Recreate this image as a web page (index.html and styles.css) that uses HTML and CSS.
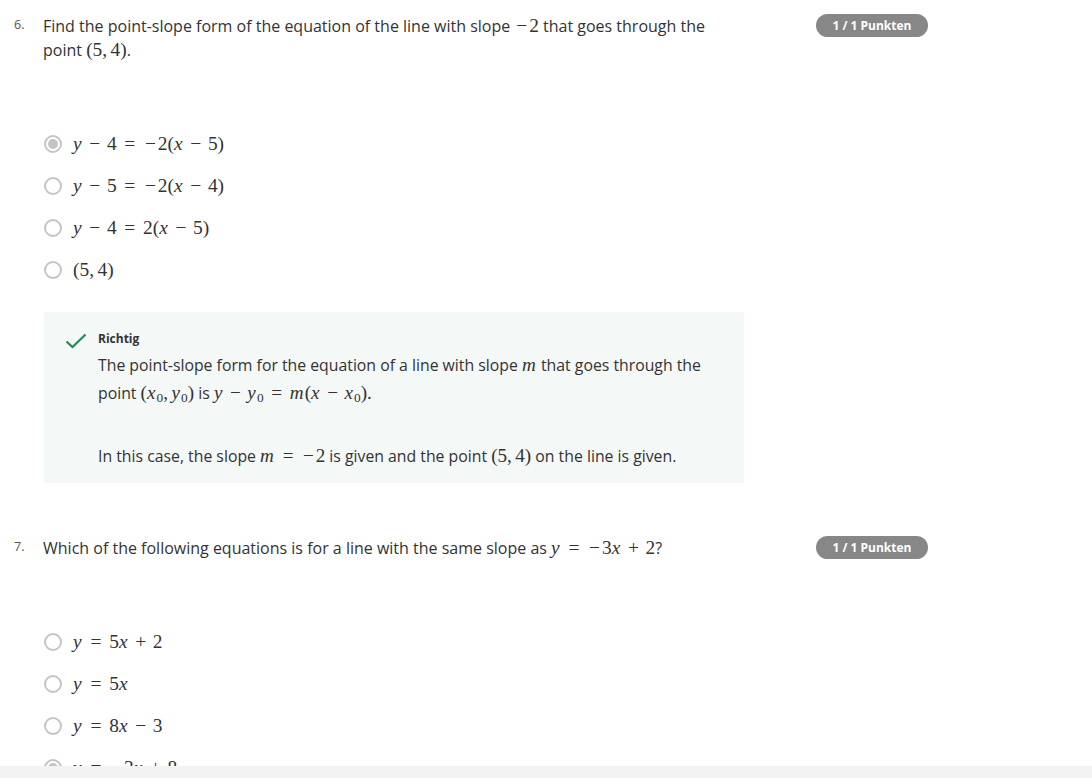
FILE: index.html
```html
<!DOCTYPE html>
<html lang="de">
<head>
<meta charset="utf-8">
<title>Quiz</title>
<link rel="stylesheet" href="styles.css">
</head>
<body>
<main class="page">
  <section class="question">
    <div class="q-head">
      <span class="q-num">6.</span>
      <p class="q-text">Find the point-slope form of the equation of the line with slope <span class="m"><u>−</u>2</span> that goes through the point <span class="m">(5,<span class="sp"></span>4)</span>.</p>
      <span class="badge">1 / 1 Punkten</span>
    </div>
    <ul class="options">
      <li class="option"><span class="radio selected"></span><span class="m eq"><i>y</i><b>−</b>4<s>=</s><u>−</u>2(<i>x</i><b>−</b>5)</span></li>
      <li class="option"><span class="radio"></span><span class="m eq"><i>y</i><b>−</b>5<s>=</s><u>−</u>2(<i>x</i><b>−</b>4)</span></li>
      <li class="option"><span class="radio"></span><span class="m eq"><i>y</i><b>−</b>4<s>=</s>2(<i>x</i><b>−</b>5)</span></li>
      <li class="option"><span class="radio"></span><span class="m eq">(5,<span class="sp"></span>4)</span></li>
    </ul>
    <div class="feedback">
      <svg class="check" width="22" height="16" viewBox="0 0 22 16"><path d="M1.5 8.5 L7.5 14 L20.5 1.5" fill="none" stroke="#1f8a55" stroke-width="2.2"/></svg>
      <div class="fb-body">
        <div class="fb-title">Richtig</div>
        <p class="fb-p">The point-slope form for the equation of a line with slope <span class="m"><i>m</i></span> that goes through the point <span class="m">(<i>x</i><sub>0</sub>,<span class="sp"></span><i>y</i><sub>0</sub>)</span> is <span class="m"><i>y</i><b>−</b><i>y</i><sub>0</sub><s>=</s><i>m</i>(<i>x</i><b>−</b><i>x</i><sub>0</sub>).</span></p>
        <p class="fb-p second">In this case, the slope <span class="m"><i>m</i><s>=</s><u>−</u>2</span> is given and the point <span class="m">(5,<span class="sp"></span>4)</span> on the line is given.</p>
      </div>
    </div>
  </section>

  <section class="question q7">
    <div class="q-head">
      <span class="q-num">7.</span>
      <p class="q-text">Which of the following equations is for a line with the same slope as <span class="m"><i>y</i><s>=</s><u>−</u>3<i>x</i><b>+</b>2</span>?</p>
      <span class="badge">1 / 1 Punkten</span>
    </div>
    <ul class="options">
      <li class="option"><span class="radio"></span><span class="m eq"><i>y</i><s>=</s>5<i>x</i><b>+</b>2</span></li>
      <li class="option"><span class="radio"></span><span class="m eq"><i>y</i><s>=</s>5<i>x</i></span></li>
      <li class="option"><span class="radio"></span><span class="m eq"><i>y</i><s>=</s>8<i>x</i><b>−</b>3</span></li>
      <li class="option"><span class="radio selected"></span><span class="m eq"><i>y</i><s>=</s><u>−</u>3<i>x</i><b>+</b>8</span></li>
    </ul>
  </section>
</main>
<div class="bottom-bar"></div>
</body>
</html>
```
FILE: styles.css
```css
html, body {
  margin: 0;
  padding: 0;
  background: #ffffff;
  overflow: hidden;
}
body {
  font-family: "Open Sans", "Liberation Sans", sans-serif;
  color: #333333;
  font-size: 16px;
}
.page {
  padding: 14px 0 0 0;
}
.question {
  padding-left: 14px;
}
.q7 {
  margin-top: 53px;
}
.q-head {
  display: flex;
  align-items: flex-start;
}
.q-num {
  width: 29px;
  flex: none;
  font-size: 12.5px;
  line-height: 22px;
  color: #555555;
}
.q-text {
  margin: 0;
  width: 700px;
  flex: none;
  line-height: 24px;
  color: #333333;
}
.badge {
  margin-left: 73px;
  flex: none;
  width: 112px;
  height: 23px;
  border-radius: 12px;
  background: #878787;
  color: #ffffff;
  font-size: 12px;
  font-weight: 700;
  line-height: 23px;
  text-align: center;
}
.m {
  font-family: "Liberation Serif", "DejaVu Serif", serif;
  font-size: 1.21em;
  color: #333333;
  white-space: nowrap;
}
.m i {
  font-style: italic;
  margin-right: 0.06em;
}
.m b {
  font-weight: 400;
  margin: 0 0.34em;
}
.m s {
  text-decoration: none;
  margin: 0 0.4em;
}
.m u {
  text-decoration: none;
  margin: 0 0.1em;
}
.m .sp {
  display: inline-block;
  width: 0.18em;
}
.m sub {
  font-size: 0.7em;
  vertical-align: -0.25em;
  line-height: 0;
}
.options {
  list-style: none;
  margin: 61px 0 0 0;
  padding: 0 0 0 30px;
}
.option {
  display: flex;
  align-items: center;
  height: 42px;
}
.radio {
  box-sizing: border-box;
  width: 18px;
  height: 18px;
  border: 2px solid #c4c4c4;
  border-radius: 50%;
  flex: none;
  display: flex;
  align-items: center;
  justify-content: center;
  margin-right: 11px;
}
.radio.selected::after {
  content: "";
  width: 10px;
  height: 10px;
  border-radius: 50%;
  background: #c4c4c4;
}
.eq {
  font-size: 19.4px;
  line-height: 22px;
}
.feedback {
  margin: 21px 0 0 30px;
  width: 700px;
  box-sizing: border-box;
  background: #f4f8f7;
  display: flex;
  align-items: flex-start;
  padding: 18px 20px 13px 21px;
  font-size: 15.8px;
}
.check {
  flex: none;
  margin-top: 3px;
  margin-right: 11px;
}
.fb-body {
  flex: 1;
}
.fb-title {
  font-size: 12px;
  font-weight: 700;
  line-height: 18px;
  color: #333333;
}
.fb-p {
  margin: 3px 0 0 0;
  line-height: 27px;
}
.fb-p.second {
  margin-top: 35px;
}
.bottom-bar {
  position: fixed;
  left: 0;
  right: 0;
  bottom: 0;
  height: 12px;
  background: #f3f3f3;
}
```
